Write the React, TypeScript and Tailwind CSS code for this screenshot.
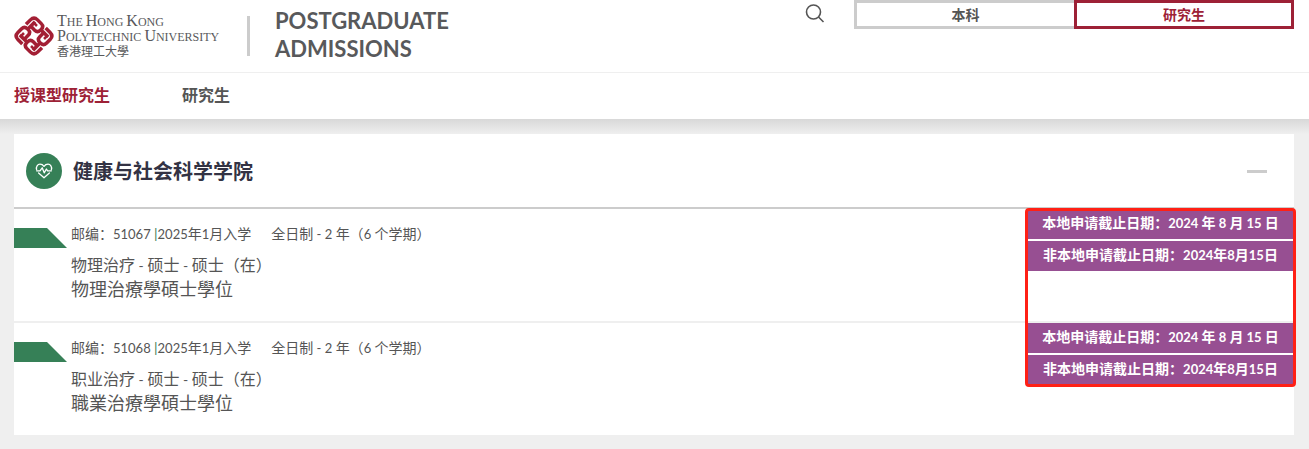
import React from 'react';

const programmes = [
    { code: '51067', name: '物理治疗 - 硕士 - 硕士（在）', nameTc: '物理治療學碩士學位' },
    { code: '51068', name: '职业治疗 - 硕士 - 硕士（在）', nameTc: '職業治療學碩士學位' },
];

const deadlines = [
    '本地申请截止日期：2024 年 8 月 15 日',
    '非本地申请截止日期：2024年8月15日',
];

// Latin runs are set a little smaller than the Chinese around them
function Mixed({ text, latin }: { text: string; latin: string }) {
    return (
        <>
            {text.split(/([\x20-\x7e]+)/).map((part, i) => (
                i % 2 ? <span key={i} className={latin}>{part}</span> : part
            ))}
        </>
    );
}

function LogoMark() {
    return (
        <svg viewBox="0 0 40 40" className="h-10 w-10 shrink-0" aria-hidden="true">
            <g transform="translate(20 20) rotate(45)" fill="none" stroke="#a31f34" strokeWidth="3.5">
                {[0, 90, 180, 270].map(angle => (
                    <g key={angle} transform={`rotate(${angle})`}>
                        <path d="M-13.9 -2.6V-8.9Q-13.9 -13.9 -8.9 -13.9H-3.6Q0.4 -13.9 0.4 -9.9V-8.6Q0.4 -4.6 -3.6 -4.6H-9.4" />
                        <path d="M-9.3 -10.8V0" />
                        <path d="M-9.3 -9.2H-5" strokeWidth="2.6" />
                    </g>
                ))}
            </g>
        </svg>
    );
}

function Header() {
    return (
        <header className="flex h-[73px] items-start justify-between border-b border-[#efefef] pr-[15px] pl-[14px]">
            <div className="flex items-center pt-[7px]">
                <a href="#" className="flex items-center gap-[3px]">
                    <LogoMark />
                    <div className="w-[190px] text-[#58595b] whitespace-nowrap">
                        <div className="font-['Liberation_Serif',serif] text-xs leading-[13px]">
                            <div>
                                <span className="text-base leading-[13px]">T</span>HE <span className="text-base leading-[13px]">H</span>ONG <span className="text-base leading-[13px]">K</span>ONG
                            </div>
                            <div>
                                <span className="text-base leading-[13px]">P</span>OLYTECHNIC <span className="text-base leading-[13px]">U</span>NIVERSITY
                            </div>
                        </div>
                        <div className="font-['Noto_Sans_CJK_TC',sans-serif] text-xs leading-[14px]">香港理工大學</div>
                    </div>
                </a>
                <div className="h-10 w-[3px] bg-[#cccccc]" />
                <div className="ml-[25px] pb-[2px] text-[22px] leading-7 font-bold text-[#58595b]">
                    <div>POSTGRADUATE</div>
                    <div>ADMISSIONS</div>
                </div>
            </div>

            <div className="flex items-start">
                <button type="button" aria-label="搜索" className="mt-1 mr-[29px]">
                    <svg viewBox="0 0 20 20" className="h-5 w-5" fill="none" stroke="#555555" strokeWidth="1.6">
                        <circle cx="8.5" cy="8" r="7" />
                        <path d="M13.5 13L18.5 18" />
                    </svg>
                </button>
                <a href="#" className="flex h-[29px] w-[220px] items-center justify-center border-3 border-r-0 border-[#cccccc] text-sm font-bold text-[#555555]">
                    本科
                </a>
                <a href="#" className="flex h-[29px] w-[220px] items-center justify-center border-3 border-[#9d2136] text-sm font-bold text-[#9d2136]">
                    研究生
                </a>
            </div>
        </header>
    );
}

export default function App() {
    return (
        <div className="bg-[#efefef] pb-[14px] font-[Lato,'Noto_Sans_CJK_SC',sans-serif] text-[#555555]">
            <div className="bg-white">
                <Header />
                <nav className="flex h-[46px] items-center gap-[72px] px-[14px] pb-0.5 text-base font-bold">
                    <a href="#" className="text-[#9d2136]">授课型研究生</a>
                    <a href="#">研究生</a>
                </nav>
            </div>
            <div className="h-[15px] bg-linear-to-b from-[#d8d8d8] to-[#efefef]" />

            <main className="mr-[15px] ml-[14px] bg-white">
                {/* Faculty */}
                <div className="flex h-[75px] items-center border-b-2 border-[#cccccc] pr-[27px] pl-3">
                    <div className="flex h-9 w-9 items-center justify-center rounded-full bg-[#368057]">
                        <svg viewBox="0 0 18 16" className="h-4 w-[18px]" fill="none" stroke="#ffffff" strokeWidth="1.3" strokeLinejoin="round" strokeLinecap="round">
                            <path d="M1.6 6.6C.8 3.6 2.6 1.2 5 1.2C6.8 1.2 8 2 9 3.4C10 2 11.2 1.2 13 1.2C15.4 1.2 17.2 3.6 16.4 6.6" />
                            <path d="M3.6 10L9 14.8L14.4 10" />
                            <path d="M1.6 7.8H5L7.2 4.8L9.2 9.8L11.4 6L12.6 7.8H16.4" />
                        </svg>
                    </div>
                    <h2 className="ml-[11px] text-xl font-bold text-[#333344]">健康与社会科学学院</h2>
                    <button type="button" aria-label="收起" className="ml-auto pt-[14px] pb-3">
                        <div className="h-[3px] w-5 bg-[#cccccc]" />
                    </button>
                </div>

                {/* Programmes */}
                <div className="relative">
                    {programmes.map((item, index) => (
                        <div key={item.code} className={`flex justify-between ${index > 0 ? 'border-t-2 border-[#efefef]' : ''}`}>
                            <div className="flex h-28">
                                <svg viewBox="0 0 53 20" className="mt-[19px] mr-1 h-5 w-[53px]" aria-hidden="true">
                                    <path d="M0 0H33L53 20H0Z" fill="#368057" />
                                </svg>
                                <div className="pt-[15px]">
                                    <div className="flex gap-5 text-sm">
                                        <span>
                                            <Mixed text={`邮编：${item.code} `} latin="text-[13px]" />
                                            <span className="text-[#368057]">|</span>
                                            <Mixed text="2025年1月入学" latin="text-[13px]" />
                                        </span>
                                        <span><Mixed text="全日制 - 2 年（6 个学期）" latin="text-[13px]" /></span>
                                    </div>
                                    <a href="#" className="mt-[9px] block">
                                        <div className="text-base leading-6"><Mixed text={item.name} latin="text-sm" /></div>
                                        <div className="text-lg leading-6">{item.nameTc}</div>
                                    </a>
                                </div>
                            </div>
                            <div className="flex w-[267px] flex-col gap-0.5">
                                {deadlines.map(text => (
                                    <div key={text} className="bg-[#974f92] pb-0.5 text-center text-sm leading-7 font-bold text-white">
                                        <Mixed text={text} latin="text-[13px]" />
                                    </div>
                                ))}
                            </div>
                        </div>
                    ))}
                    <div className="pointer-events-none absolute -top-px -right-0.5 h-[179px] w-[271px] rounded border-3 border-[#ff2015]" />
                </div>
            </main>
        </div>
    );
}
